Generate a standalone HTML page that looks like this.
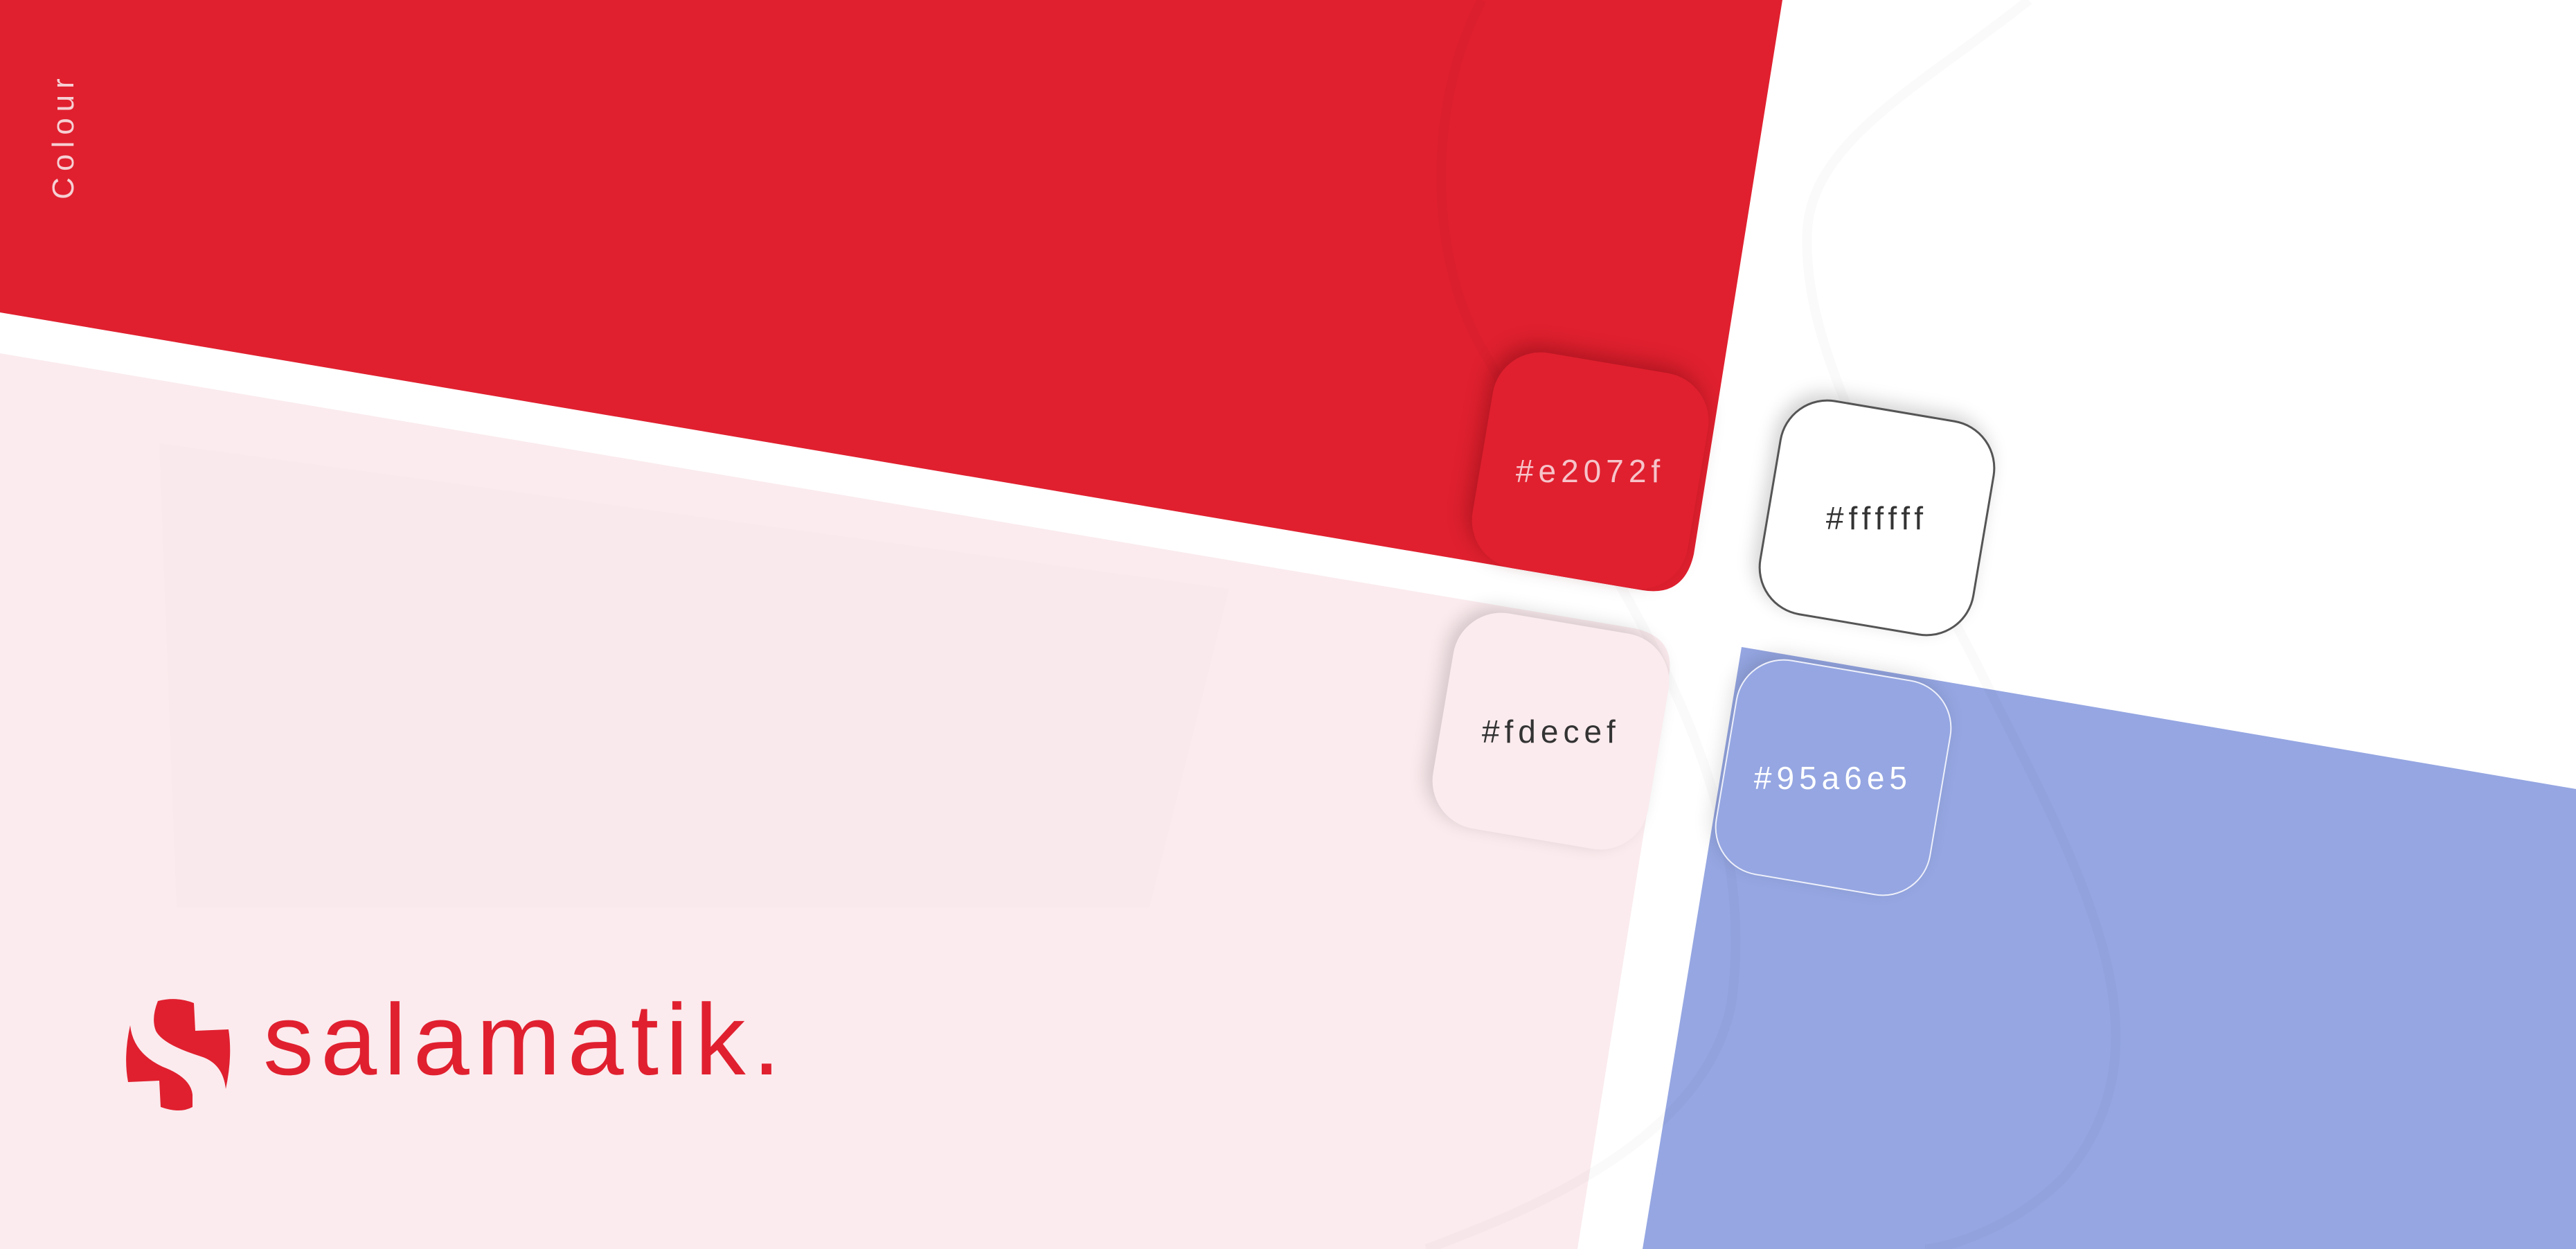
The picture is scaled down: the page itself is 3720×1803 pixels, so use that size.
<!DOCTYPE html>
<html><head><meta charset="utf-8">
<style>
html,body{margin:0;padding:0;}
body{width:3720px;height:1803px;position:relative;overflow:hidden;background:#fff;font-family:"Liberation Sans",sans-serif;}
svg.bg{position:absolute;left:0;top:0;}
.sw{position:absolute;width:315px;height:315px;border-radius:70px;transform:rotate(9.6deg);display:flex;align-items:center;justify-content:center;box-sizing:border-box;}
.sw span{transform:rotate(-9.6deg);font-size:46px;letter-spacing:7px;font-weight:300;}
.label{position:absolute;left:-8px;top:171px;width:200px;height:50px;line-height:50px;text-align:center;transform:rotate(-90deg);transform-origin:center;color:#f6d0d4;font-size:44px;letter-spacing:9px;}
.logo{position:absolute;left:380px;top:1428px;color:#e0202f;font-size:146px;letter-spacing:10px;line-height:1;}
</style></head><body>
<svg class="bg" width="3720" height="1803" viewBox="0 0 3720 1803">
  <path d="M0 0 L2574 0 L2446 800 Q2432 862 2372 852 L0 451 Z" fill="#e0202f"/>
  <path d="M0 510 L2360 907 Q2420 920 2410 975 L2278 1803 L0 1803 Z" fill="#fbebee"/>
  <path d="M230 640 L1775 850 L1660 1310 L255 1310 Z" fill="#f9e4e8" opacity="0.35"/>
  <path d="M2515 934 L3720 1139 L3720 1803 L2372 1803 Z" fill="#95a6e2"/>
  <g fill="none" stroke="#000" stroke-opacity="0.02" stroke-width="14">
    <path d="M2140 0 C2060 150 2060 380 2150 520 C2300 800 2550 1100 2500 1450 C2460 1650 2200 1750 2060 1803"/>
    <path d="M2930 0 C2780 120 2620 200 2610 330 C2600 500 2720 700 2850 950 C3000 1250 3150 1500 2980 1700 C2900 1780 2800 1803 2780 1803"/>
  </g>
</svg>
<div class="label">Colour</div>

<div class="sw" style="left:2139px;top:522px;background:#e0202f;box-shadow:-8px -10px 28px rgba(90,0,10,0.35);"><span style="color:#f6c4ca;">#e2072f</span></div>
<div class="sw" style="left:2553px;top:590px;background:#fff;border:3px solid #555;box-shadow:-8px -8px 26px rgba(0,0,0,0.18);"><span style="color:#333;">#ffffff</span></div>
<div class="sw" style="left:2082px;top:898px;background:#fbebee;box-shadow:-10px -6px 26px rgba(0,0,0,0.16);"><span style="color:#333;">#fdecef</span></div>
<div class="sw" style="left:2490px;top:965px;background:#95a6e2;border:2px solid #eef0fa;box-shadow:-8px -8px 26px rgba(0,0,0,0.12);"><span style="color:#fff;">#95a6e5</span></div>

<svg style="position:absolute;left:180px;top:1440px" width="160" height="165" viewBox="0 0 160 165">
  <path d="M48 5 Q75 -2 100 8 L102 48 L150 46 Q156 85 146 132 Q142 95 110 85 Q55 68 45 48 Q38 30 48 5 Z" fill="#e0202f"/>
  <path d="M8 40 Q12 80 55 100 Q95 115 98 140 L98 158 Q80 168 52 158 L50 120 L5 122 Q-2 85 8 40 Z" fill="#e0202f"/>
</svg>
<div class="logo">salamatik.</div>
</body></html>
